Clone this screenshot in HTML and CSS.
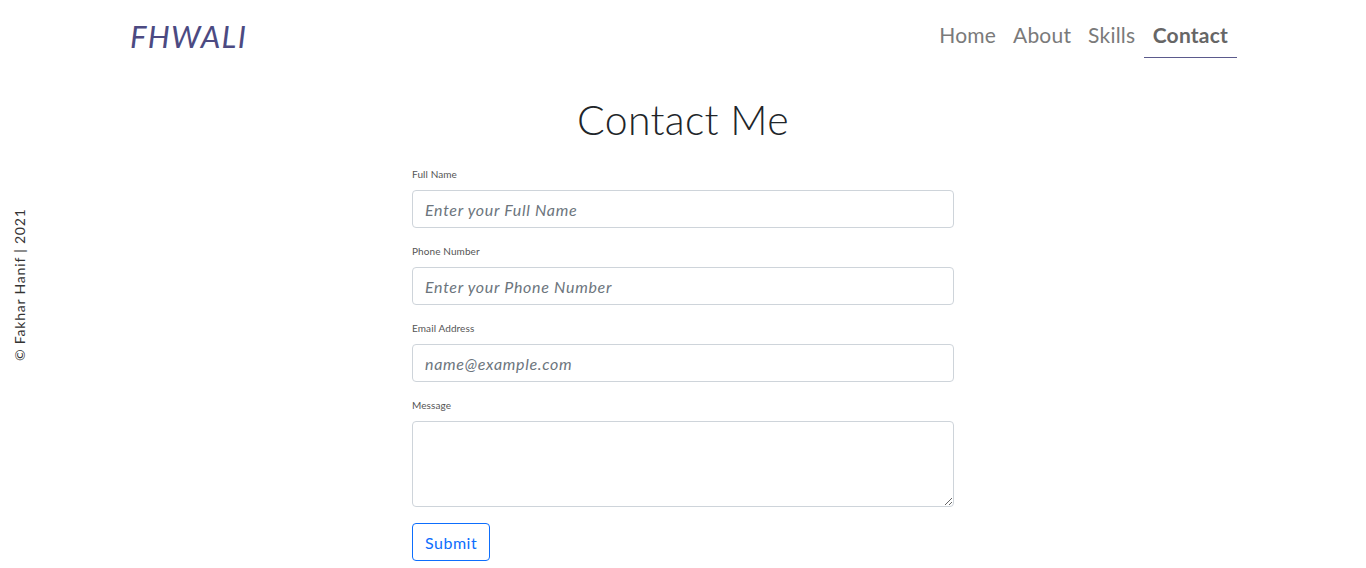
FILE: index.html
```html
<!DOCTYPE html>
<html>
<head>
<meta charset="utf-8">
<link rel="stylesheet" href="styles.css">
</head>
<body>
<header class="navbar">
  <a class="brand">FHWALI</a>
  <nav class="nav">
    <a class="nav-link">Home</a>
    <a class="nav-link">About</a>
    <a class="nav-link">Skills</a>
    <a class="nav-link active">Contact</a>
  </nav>
</header>
<aside class="side">© Fakhar Hanif | 2021</aside>
<main class="main">
  <h1 class="title">Contact Me</h1>
  <form class="form">
    <label class="label">Full Name</label>
    <input class="field" type="text" placeholder="Enter your Full Name">
    <label class="label">Phone Number</label>
    <input class="field" type="text" placeholder="Enter your Phone Number">
    <label class="label">Email Address</label>
    <input class="field" type="text" placeholder="name@example.com">
    <label class="label">Message</label>
    <textarea class="field area"></textarea>
    <button class="btn" type="button">Submit</button>
  </form>
</main>
</body>
</html>
```

FILE: styles.css
```css
* { box-sizing: border-box; }
body {
  margin: 0;
  font-family: "Lato", "Noto Sans", sans-serif;
  color: #212529;
  background: #fff;
}
.navbar {
  display: flex;
  justify-content: space-between;
  align-items: flex-start;
  padding: 0 129px 0 130px;
  height: 72px;
}
.brand {
  font-size: 31px;
  font-style: italic;
  font-weight: 400;
  color: #4c4a82;
  margin-top: 17px;
  letter-spacing: 1.3px;
}
.nav { display: flex; }
.nav-link {
  display: block;
  font-size: 21px;
  font-weight: 400;
  color: #7a7a7a;
  padding: 22px 8.5px 10px;
  letter-spacing: 0.2px;
  border-bottom: 1px solid transparent;
}
.nav-link.active {
  font-weight: 700;
  color: #666;
  padding: 22px 9px 10px;
  border-bottom-color: #5b5a8c;
}
.side {
  position: absolute;
  left: 11px;
  top: 361px;
  transform: rotate(-90deg);
  transform-origin: left top;
  font-size: 14px;
  font-weight: 400;
  letter-spacing: 0.8px;
  color: #333;
  white-space: nowrap;
}
.main {
  width: 542px;
  margin: 0 auto;
}
.title {
  margin: 24px 0 24px;
  text-align: center;
  font-weight: 300;
  font-size: 41px;
  line-height: 48px;
  letter-spacing: 0.3px;
}
.form { display: flex; flex-direction: column; align-items: flex-start; }
.label {
  font-size: 10px;
  color: #555;
  line-height: 12px;
  margin-bottom: 10px;
  letter-spacing: 0.1px;
}
.field {
  width: 542px;
  height: 38px;
  border: 1px solid #ced4da;
  border-radius: 4px;
  padding: 6px 12px;
  font-family: inherit;
  font-size: 16px;
  margin-bottom: 17px;
  color: #212529;
}
.field::placeholder { color: #6c757d; font-style: italic; letter-spacing: 0.7px; }
.area { height: 86px; resize: vertical; margin-bottom: 16px; }
.btn {
  height: 38px;
  padding: 0 12px;
  border: 1px solid #0d6efd;
  border-radius: 4px;
  background: #fff;
  color: #0d6efd;
  font-family: inherit;
  font-size: 16px;
  letter-spacing: 0.5px;
}
```
